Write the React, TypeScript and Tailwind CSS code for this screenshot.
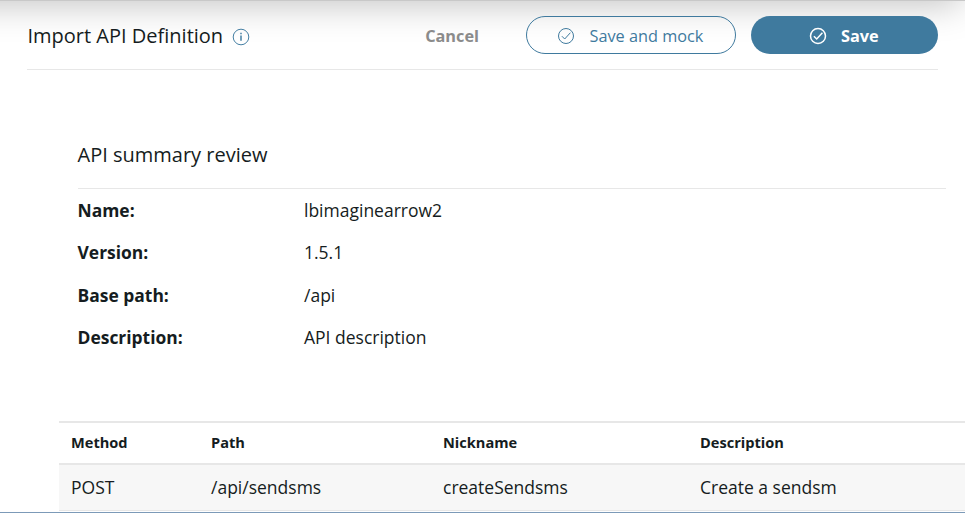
import React from "react";

function CheckIcon({ weight }: { weight: number }) {
  return (
    <svg className="size-[18px] shrink-0" viewBox="0 0 18 18" fill="none" stroke="currentColor" strokeWidth={weight}>
      <circle cx="9" cy="9" r="7.5" />
      <path d="m4.9 9.2 2.8 2.8 5.7-6.3" />
    </svg>
  );
}

const details = [
  ["Name:", "lbimaginearrow2"],
  ["Version:", "1.5.1"],
  ["Base path:", "/api"],
  ["Description:", "API description"],
];

export default function App() {
  return (
    <div className="relative h-[513px] w-[965px] overflow-hidden border-b border-[#7c9ab8] bg-white font-['Open_Sans','Noto_Sans',sans-serif] text-[#151c21]">
      <div className="pointer-events-none absolute -left-10 -top-10 h-10 w-[997px] shadow-[0_0_36px_4px_rgba(0,0,0,0.25)]" />
      <div className="pointer-events-none absolute inset-x-0 top-0 h-px bg-[#c8c8c8]" />
      <header className="relative ml-[27px] flex h-[70px] w-[911px] items-start border-b border-[#e7e7e7] pt-4">
        <div className="flex h-[38px] items-center pt-px">
          <h1 className="w-[205px] whitespace-nowrap pl-[0.5px] text-[20px] leading-[30px]">Import API Definition</h1>
          <svg className="mt-0.5 size-[18px]" viewBox="0 0 18 18" fill="none" stroke="#4680a4">
            <circle cx="9" cy="9" r="7.8" />
            <path d="M9 7.5v5.2M9 4.7v1.6" strokeWidth="1.5" />
          </svg>
        </div>
        <div className="ml-auto flex items-center">
          <button className="mr-[47px] pt-0.5 text-[16.3px] font-bold text-[#8b8b8b]">Cancel</button>
          <button className="mr-[15px] flex h-[38px] w-[210px] items-center gap-[14.5px] rounded-full border border-[#3f7a9e] pl-[30px] pt-0.5 text-[16.3px] text-[#3f7a9e]"><CheckIcon weight={1} /><span className="pt-px">Save and mock</span></button>
          <button className="flex h-[38px] w-[187px] items-center gap-[14px] rounded-full bg-[#3f7a9e] pl-[58px] pt-0.5 text-[16.3px] font-bold text-white"><CheckIcon weight={1.5} /><span className="pt-px">Save</span></button>
        </div>
      </header>
      <main>
        <section className="ml-[77.5px] mt-[70px] w-[868px]">
          <h2 className="h-[49px] border-b border-[#e7e7e7] text-[20px] leading-[30px]">API summary review</h2>
          <dl className="text-[17.5px]">
            {details.map(([label, value]) => (
              <div key={label} className="flex h-[42.4px] items-center">
                <dt className="w-[226.5px] text-[17.45px] font-bold leading-[26.25px]">{label}</dt>
                <dd className="leading-[26.25px]">{value}</dd>
              </div>
            ))}
          </dl>
        </section>
        <div className="ml-[59px] mt-[62px] border-t-2 border-[#e7e7e7]">
          <div className="grid h-10 grid-cols-[140px_232px_257px_1fr] items-center pl-3 text-[14.6px] font-bold">
            <span>Method</span><span>Path</span><span>Nickname</span><span>Description</span>
          </div>
          <div className="grid h-12 grid-cols-[140px_232px_257px_1fr] items-center border-b border-t-2 border-[#e7e7e7] bg-[#f7f7f7] pl-3 text-[17.5px]">
            <span>POST</span><span>/api/sendsms</span><span>createSendsms</span><span>Create a sendsm</span>
          </div>
        </div>
      </main>
    </div>
  );
}
